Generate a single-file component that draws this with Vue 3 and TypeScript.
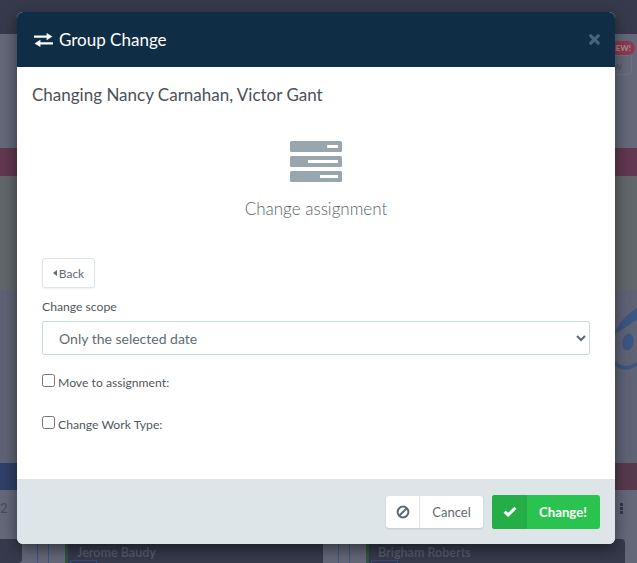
<script setup lang="ts">
import { ref } from 'vue'
const scope = ref('only')
const moveTo = ref(false)
const changeType = ref(false)
</script>

<template>
  <div class="page">
    <div class="bg">
      <div class="bg-top"></div>
      <div class="bg-head">
        <span class="bg-view">View</span>
        <span class="bg-new">NEW!</span>
      </div>
      <div class="bg-red"></div>
      <div class="bg-green"></div>
      <div class="bg-slate">
        <svg class="bg-logo" width="60" height="90" viewBox="0 0 60 90">
          <path d="M13 31C18 18 26 10 36 4L36 16C28 20 22 26 13 31Z" fill="#3b5682" />
          <ellipse cx="27" cy="38" rx="5.5" ry="8.5" fill="#3b5682" transform="rotate(12 27 38)" />
          <path d="M13 58C20 66 28 65 36 60" fill="none" stroke="#3b5682" stroke-width="3.5" />
          <path d="M13 34q3 4 0 8z" fill="#3b5682" />
        </svg>
      </div>
      <div class="bg-bands">
        <div class="band-blue"></div>
        <div class="band-maroon"></div>
      </div>
      <div class="bg-row">
        <span class="bg-num">2</span>
        <span class="bg-dots"><i></i><i></i><i></i></span>
      </div>
      <div class="bg-cards">
        <div class="bg-card edge"></div>
        <div class="bg-strip"></div>
        <div class="bg-card named"><span>Jerome Baudy</span><b class="tag"></b></div>
        <div class="bg-strip"></div>
        <div class="bg-card named"><span>Brigham Roberts</span><b class="tag"></b></div>
        <div class="bg-strip"></div>
      </div>
    </div>

    <div class="modal">
      <header class="modal-header">
        <svg class="swap" width="19" height="14" viewBox="0 0 19 14">
          <path d="M0 2.6h12.6V0L18.4 3.6 12.6 7.2V4.8H0z" fill="#fff" />
          <path d="M19 9.2H6.4V6.8L0.6 10.4 6.4 14V11.4H19z" fill="#fff" />
        </svg>
        <h2 class="title">Group Change</h2>
        <svg class="close" width="11" height="11" viewBox="0 0 11 11">
          <path d="M1.8 1.8l7.4 7.4M9.2 1.8l-7.4 7.4" stroke="#48647a" stroke-width="3.2" stroke-linecap="round" />
        </svg>
      </header>

      <div class="modal-body">
        <p class="changing">Changing Nancy Carnahan, Victor Gant</p>

        <div class="hero">
          <svg class="servers" width="52" height="41" viewBox="0 0 52 41">
            <rect x="0" y="0" width="52" height="11" rx="1.5" fill="#9aa6ad" />
            <rect x="37" y="4" width="11" height="3" fill="#fff" />
            <rect x="0" y="15" width="52" height="11" rx="1.5" fill="#9aa6ad" />
            <rect x="18" y="19" width="30" height="3" fill="#fff" />
            <rect x="0" y="30" width="52" height="11" rx="1.5" fill="#9aa6ad" />
            <rect x="30" y="34" width="18" height="3" fill="#fff" />
          </svg>
          <div class="hero-label">Change assignment</div>
        </div>

        <div class="form">
          <button class="back" type="button"><span class="caret"></span>Back</button>
          <label class="scope-label" for="scope">Change scope</label>
          <select id="scope" v-model="scope" class="scope">
            <option value="only">Only the selected date</option>
            <option value="future">This and future dates</option>
          </select>
          <label class="check first"><input v-model="moveTo" type="checkbox" /><span>Move to assignment:</span></label>
          <label class="check second"><input v-model="changeType" type="checkbox" /><span>Change Work Type:</span></label>
        </div>
      </div>

      <footer class="modal-footer">
        <button class="btn cancel" type="button">
          <span class="btn-icon">
            <svg width="14" height="14" viewBox="0 0 14 14">
              <circle cx="7" cy="7" r="5.4" fill="none" stroke="#5f6b73" stroke-width="2" />
              <path d="M3.2 10.8l7.6-7.6" stroke="#5f6b73" stroke-width="2" />
            </svg>
          </span>
          <span class="btn-text">Cancel</span>
        </button>
        <button class="btn change" type="button">
          <span class="btn-icon">
            <svg width="14" height="11" viewBox="0 0 14 11">
              <path d="M1.6 5.6l3.6 3.4L12.4 1.8" fill="none" stroke="#fff" stroke-width="3" />
            </svg>
          </span>
          <span class="btn-text">Change!</span>
        </button>
      </footer>
    </div>
  </div>
</template>

<style>
html, body { margin: 0; background: #33384a; overflow: hidden; }
</style>

<style scoped>
.page {
  position: relative;
  width: 637px;
  height: 563px;
  overflow: hidden;
  font-family: "Lato", "Open Sans", sans-serif;
  color: #3f474d;
}
.bg { display: flex; flex-direction: column; height: 563px; background: #646879; }
.bg-top { height: 34px; background: #363a4c; flex: none; }
.bg-head { height: 114px; flex: none; background: #646879; position: relative; }
.bg-new {
  position: absolute; right: 2px; top: 7px; width: 34px; height: 14px; border-radius: 7px;
  background: #8a3b50; color: #b58a96; font: 700 8px/14px "Lato", sans-serif; text-align: right; padding-right: 4px; box-sizing: border-box;
}
.bg-view {
  position: absolute; right: 5px; top: 21px; width: 40px; height: 20px; box-sizing: border-box; padding: 3px 9px 0 0;
  border: 1px solid #6c7083; border-radius: 2px; color: #4b4f5f; font-size: 11px; text-align: right;
}
.bg-red { height: 28px; flex: none; background: #623850; }
.bg-green { height: 114px; flex: none; background: #62676b; }
.bg-slate { height: 173px; flex: none; background: #5f6376; position: relative; }
.bg-logo { position: absolute; right: -24px; top: 14px; }
.bg-bands { height: 27px; flex: none; display: grid; grid-template-columns: 1fr 1fr; }
.band-blue { background: #2f3f67; }
.band-maroon { background: #563a4c; }
.bg-row { height: 49px; flex: none; background: #646879; position: relative; }
.bg-num { position: absolute; left: 0; top: 10px; font-size: 13px; color: #3e5158; }
.bg-dots { position: absolute; left: 620px; top: 13px; display: flex; flex-direction: column; gap: 1px; }
.bg-dots i { display: block; width: 3px; height: 3px; background: #34384a; }
.bg-cards {
  flex: 1;
  display: grid;
  grid-template-columns: 22px 43px 258px 43px 259px 12px;
  background: #646879;
}
.bg-strip {
  background:
    linear-gradient(#3d5688, #3d5688) 15px 0 / 1px 100% no-repeat,
    linear-gradient(#3d5688, #3d5688) 26px 0 / 1px 100% no-repeat;
}
.bg-card { background: #363a4c; border-radius: 0 4px 4px 0; position: relative; }
.bg-card.named { border-left: 3px solid #33553f; border-radius: 0 4px 0 0; color: #55596a; font-size: 12.5px; font-weight: 700; padding: 6px 0 0 9px; }
.bg-card.named span { display: block; line-height: 15px; }
.tag { position: absolute; left: 2px; top: 21px; width: 27px; height: 3px; border: 1px solid #2f4f86; border-bottom: 0; box-sizing: border-box; }

.modal {
  position: absolute;
  left: 17px;
  top: 12px;
  width: 598px;
  height: 532px;
  display: flex;
  flex-direction: column;
  border-radius: 6px;
  overflow: hidden;
  background: #fff;
  box-shadow: 0 5px 15px rgba(0, 0, 0, 0.5);
}
.modal-header {
  flex: none;
  height: 55px;
  display: flex;
  align-items: center;
  padding: 0 15px 0 17px;
  background: #0f2e46;
  color: #fff;
}
.swap { margin-right: 6px; }
.title { margin: 0; flex: 1; font-size: 17px; font-weight: 400; line-height: 1; }
.close { display: block; }
.modal-body { flex: 1; padding: 16px 25px 0 15px; }
.changing { margin: 0; font-size: 17px; line-height: 24px; color: #4a5157; }
.hero { display: flex; flex-direction: column; align-items: center; margin-top: 34px; padding-left: 10px; }
.servers { display: block; }
.hero-label { margin-top: 16px; font-size: 17px; line-height: 22px; font-weight: 300; color: #5a6268; }
.form { display: flex; flex-direction: column; align-items: flex-start; margin: 38px 0 0 10px; }
.back {
  width: 53px; height: 30px; padding: 0; border: 1px solid #dde5e8; border-radius: 3px; background: #fff;
  font: 400 12px "Lato", sans-serif; color: #5f6b73; display: flex; align-items: center; justify-content: center;
  box-shadow: 0 1px 2px rgba(0, 0, 0, 0.06);
}
.caret { width: 0; height: 0; border: 3px solid transparent; border-right: 4px solid #5f6b73; border-left: 0; margin-right: 2px; }
.scope-label { margin-top: 11px; font-size: 12.2px; line-height: 16px; color: #50585e; }
.scope {
  width: 548px; height: 34px; margin-top: 6px; padding: 0 12px; border: 1px solid #c9dadb; border-radius: 2px;
  background: #fff; font: 400 14px "Lato", sans-serif; color: #5f6b73;
}
.check { display: flex; align-items: flex-start; font-size: 12.2px; color: #50585e; line-height: 16px; }
.check input { width: 13px; height: 13px; margin: -1px 3px 0 0; }
.check.first { margin-top: 20px; }
.check.second { margin-top: 26px; }
.modal-footer {
  flex: none; height: 65px; display: flex; align-items: center; justify-content: flex-end; gap: 9px;
  padding: 0 15px 0 0; background: #dde5e8;
}
.btn { display: flex; align-items: stretch; padding: 0; border: 0; border-radius: 3px; overflow: hidden; font: 400 13px "Lato", sans-serif; }
.btn-icon { display: flex; align-items: center; justify-content: center; }
.btn-text { display: flex; align-items: center; justify-content: center; }
.cancel { width: 97px; height: 32px; background: #fff; color: #5f6b73; box-shadow: 0 1px 2px rgba(0, 0, 0, 0.12); }
.cancel .btn-icon { width: 33px; border-right: 1px solid #dde5e8; }
.cancel .btn-text { flex: 1; }
.change { width: 108px; height: 34px; background: #2bc350; color: #fff; }
.change .btn-icon { width: 35px; background: #25ad47; }
.change .btn-text { flex: 1; font-weight: 700; font-size: 13.2px; padding-right: 1px; }
</style>
